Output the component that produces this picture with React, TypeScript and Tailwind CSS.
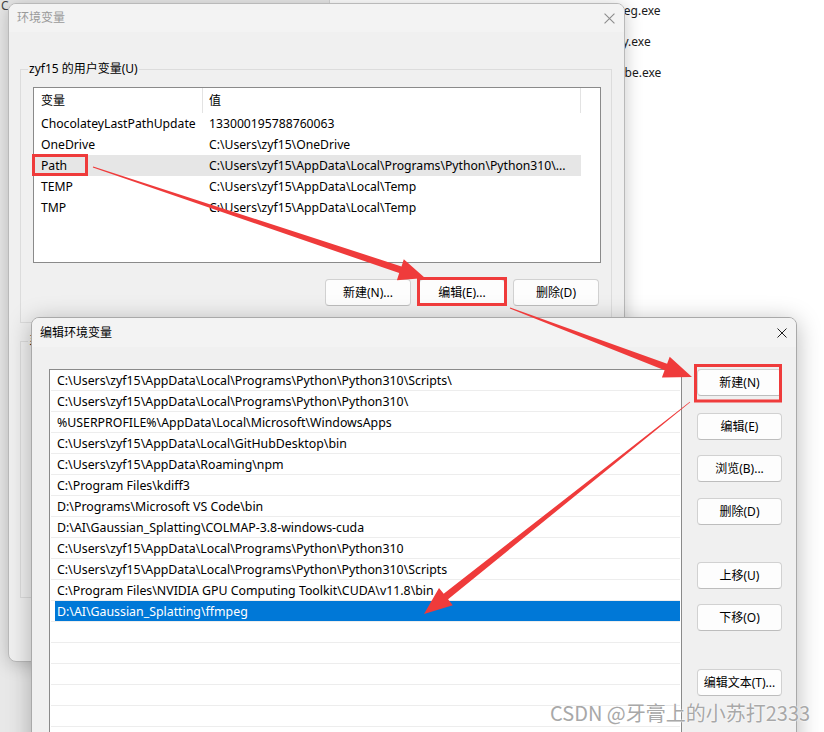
import React from "react";

type Pt = [number, number];

function arrowPoints(x1: number, y1: number, x2: number, y2: number, w0: number, w1: number, hl: number, hw: number) {
  const dx = x2 - x1;
  const dy = y2 - y1;
  const L = Math.hypot(dx, dy);
  const ux = dx / L;
  const uy = dy / L;
  const nx = -uy;
  const ny = ux;
  const bx = x2 - ux * hl;
  const by = y2 - uy * hl;
  const pts: Pt[] = [
    [x1 + (nx * w0) / 2, y1 + (ny * w0) / 2],
    [bx + (nx * w1) / 2, by + (ny * w1) / 2],
    [bx + (nx * hw) / 2, by + (ny * hw) / 2],
    [x2, y2],
    [bx - (nx * hw) / 2, by - (ny * hw) / 2],
    [bx - (nx * w1) / 2, by - (ny * w1) / 2],
    [x1 - (nx * w0) / 2, y1 - (ny * w0) / 2],
  ];
  return pts.map((p) => p.map((v) => v.toFixed(1)).join(",")).join(" ");
}

function CloseX({ color, size }: { color: string; size: number }) {
  return (
    <svg width={size} height={size} viewBox="0 0 10 10" className="shrink-0">
      <path d="M0.5 0.5 L9.5 9.5 M9.5 0.5 L0.5 9.5" stroke={color} strokeWidth="1" fill="none" />
    </svg>
  );
}

function Btn({ children, className = "" }: { children: React.ReactNode; className?: string }) {
  return (
    <div
      className={`flex h-[27px] items-center justify-center rounded-[4px] border border-[#d1d1d1] border-b-[#bdbdbd] bg-[#fdfdfd] text-[12px] text-black ${className}`}
    >
      {children}
    </div>
  );
}

function Group({ label, className = "", children }: { label: string; className?: string; children?: React.ReactNode }) {
  return (
    <div className={`relative border border-[#dcdcdc] ${className}`}>
      <span className="absolute left-[7px] top-[-9px] bg-[#f0f0f0] px-[1px] leading-[16px]">{label}</span>
      {children}
    </div>
  );
}

const userVars: [string, string][] = [
  ["ChocolateyLastPathUpdate", "133000195788760063"],
  ["OneDrive", "C:\\Users\\zyf15\\OneDrive"],
  ["Path", "C:\\Users\\zyf15\\AppData\\Local\\Programs\\Python\\Python310\\..."],
  ["TEMP", "C:\\Users\\zyf15\\AppData\\Local\\Temp"],
  ["TMP", "C:\\Users\\zyf15\\AppData\\Local\\Temp"],
];

const paths = [
  "C:\\Users\\zyf15\\AppData\\Local\\Programs\\Python\\Python310\\Scripts\\",
  "C:\\Users\\zyf15\\AppData\\Local\\Programs\\Python\\Python310\\",
  "%USERPROFILE%\\AppData\\Local\\Microsoft\\WindowsApps",
  "C:\\Users\\zyf15\\AppData\\Local\\GitHubDesktop\\bin",
  "C:\\Users\\zyf15\\AppData\\Roaming\\npm",
  "C:\\Program Files\\kdiff3",
  "D:\\Programs\\Microsoft VS Code\\bin",
  "D:\\AI\\Gaussian_Splatting\\COLMAP-3.8-windows-cuda",
  "C:\\Users\\zyf15\\AppData\\Local\\Programs\\Python\\Python310",
  "C:\\Users\\zyf15\\AppData\\Local\\Programs\\Python\\Python310\\Scripts",
  "C:\\Program Files\\NVIDIA GPU Computing Toolkit\\CUDA\\v11.8\\bin",
  "D:\\AI\\Gaussian_Splatting\\ffmpeg",
  "",
  "",
  "",
  "",
  "",
  "",
];

function Dialog1() {
  return (
    <div className="absolute left-[8px] top-[3px] flex h-[659px] w-[617px] flex-col overflow-hidden rounded-[8px] border border-[#b9b9b9] bg-[#f0f0f0] shadow-[0_2px_18px_rgba(0,0,0,0.22)]">
      <div className="flex h-[28px] shrink-0 items-center justify-between bg-[#f3f3f3] pl-[8px] pr-[9px]">
        <span className="text-[#9a9a9a]">环境变量</span>
        <CloseX color="#8c8c8c" size={11} />
      </div>
      <div className="flex flex-col pl-[11px] pr-[12px] pt-[37px]">
        <Group label="zyf15 的用户变量(U)">
          <div className="flex flex-col pb-[16px] pl-[12px] pr-[10px] pt-[17px]">
            <div className="h-[176px] border border-[#8a8a8a] bg-white">
              <div className="flex h-[25px]">
                <div className="flex w-[169px] items-center border-r border-[#e3e3e3] pl-[7px]">变量</div>
                <div className="flex w-[378px] items-center border-r border-[#e3e3e3] pl-[6px]">值</div>
              </div>
              {userVars.map(([k, v]) => (
                <div key={k} className={`flex h-[21px] w-[547px] text-[12.2px] ${k === "Path" ? "bg-[#e6e6e6]" : ""}`}>
                  <div className="flex w-[169px] items-center whitespace-nowrap pl-[7px] pt-[1px]">{k}</div>
                  <div className="flex w-[378px] items-center overflow-hidden whitespace-nowrap pl-[6px] pt-[1px]">{v}</div>
                </div>
              ))}
            </div>
            <div className="mt-[16px] flex justify-end gap-[8px] pr-[2px]">
              <Btn className="w-[86px]">新建(N)...</Btn>
              <Btn className="w-[86px]">编辑(E)...</Btn>
              <Btn className="w-[86px]">删除(D)</Btn>
            </div>
          </div>
        </Group>
        <Group label="系统变量(S)" className="mt-[18px] h-[257px]" />
      </div>
    </div>
  );
}

function Dialog2() {
  const buttons: [string, string][] = [
    ["新建(N)", "mt-0"],
    ["编辑(E)", "mt-[17px]"],
    ["浏览(B)...", "mt-[15px]"],
    ["删除(D)", "mt-[16px]"],
    ["上移(U)", "mt-[37px]"],
    ["下移(O)", "mt-[15px]"],
    ["编辑文本(T)...", "mt-[38px]"],
  ];
  return (
    <div className="absolute left-[31px] top-[317px] flex h-[470px] w-[766px] flex-col overflow-hidden rounded-t-[8px] border border-[#a9a9a9] bg-[#f0f0f0] shadow-[0_4px_24px_rgba(0,0,0,0.28)]">
      <div className="flex h-[29px] shrink-0 items-center justify-between bg-[#f3f3f3] pl-[8px] pr-[9px]">
        <span className="text-black">编辑环境变量</span>
        <CloseX color="#1f1f1f" size={10} />
      </div>
      <div className="flex pl-[17px] pr-[14px] pt-[22px]">
        <div className="h-[420px] w-[633px] shrink-0 border border-[#8a8a8a] bg-white px-[1px]">
          {paths.map((p, i) => (
            <div key={i} className="flex h-[21px] border-b border-[#ededed]">
              <div
                className={`ml-[4px] flex flex-1 items-center whitespace-nowrap pl-[2px] pt-[2px] text-[12.35px] ${
                  i === 11 ? "bg-[#0078d7] text-white" : "text-black"
                }`}
              >
                {p}
              </div>
            </div>
          ))}
        </div>
        <div className="ml-[15px] flex w-[85px] shrink-0 flex-col">
          {buttons.map(([t, m]) => (
            <Btn key={t} className={m}>
              {t}
            </Btn>
          ))}
        </div>
      </div>
    </div>
  );
}

function Annotations() {
  const red = "#ef3b3b";
  return (
    <svg className="pointer-events-none absolute left-0 top-0" width="824" height="732" viewBox="0 0 824 732">
      <rect x="33.5" y="155.5" width="53" height="19" fill="none" stroke={red} strokeWidth="3" />
      <rect x="418.5" y="278.5" width="87" height="26" fill="none" stroke={red} strokeWidth="3" />
      <rect x="695.5" y="365.5" width="85" height="35.5" fill="none" stroke={red} strokeWidth="3" />
      <polygon points={arrowPoints(93, 167, 425, 278, 1, 7, 26, 22)} fill={red} />
      <polygon points={arrowPoints(510, 308, 692, 377, 1, 7, 28, 22)} fill={red} />
      <polygon points={arrowPoints(690, 402, 424, 614, 0.8, 7, 28, 22)} fill={red} />
    </svg>
  );
}

export default function App() {
  return (
    <div className="relative h-[732px] w-[824px] overflow-hidden bg-white font-['Noto_Sans','Noto_Sans_CJK_SC',sans-serif] text-[12px] text-black">
      <div className="absolute left-0 top-0 h-[732px] w-[330px] border-r border-[#d6d6d6] bg-[#e8e8e8]">
        <div className="pl-[1px] leading-[12px] text-[#444]">C</div>
      </div>
      <div className="absolute left-[330px] top-0 h-[732px] w-[494px] bg-white">
        <div className="-mt-[5px] flex flex-col pl-[267px]">
          {["ffmpeg.exe", "ffplay.exe", "ffprobe.exe"].map((n) => (
            <div key={n} className="flex h-[31px] items-center text-[12px] text-[#1a1a1a]">
              {n}
            </div>
          ))}
        </div>
      </div>
      <Dialog1 />
      <Dialog2 />
      <Annotations />
      <div className="absolute left-[550px] top-[700px] whitespace-nowrap font-['Noto_Sans_CJK_SC',sans-serif] text-[20px] leading-[26px] text-[#a8a8a8] [text-shadow:0_0_2px_#ffffff,0_0_1px_#ffffff]">
        CSDN @牙膏上的小苏打2333
      </div>
    </div>
  );
}
